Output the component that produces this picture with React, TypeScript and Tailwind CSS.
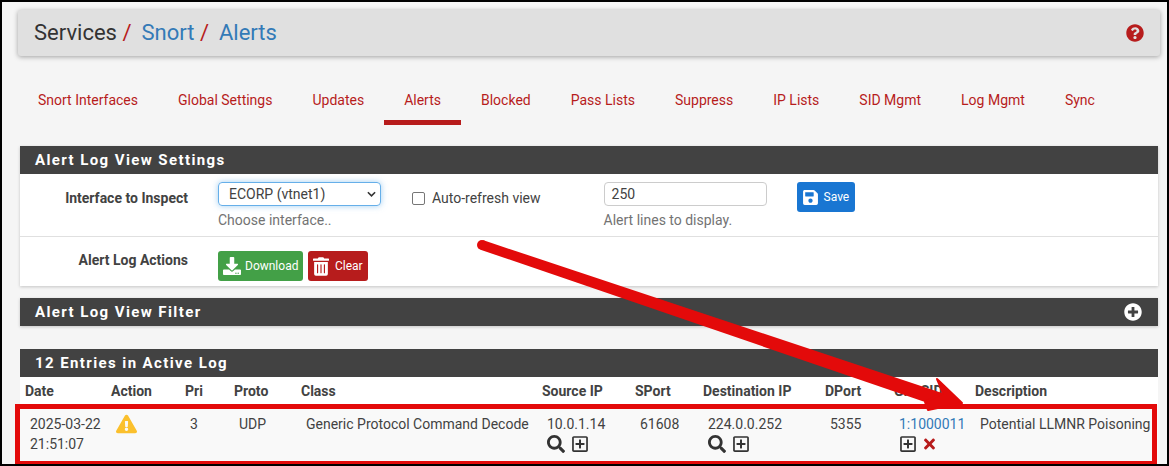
import { FaDownload, FaExclamationTriangle, FaPlusCircle, FaQuestionCircle, FaRegPlusSquare, FaSave, FaSearch, FaTimes, FaTrashAlt } from "react-icons/fa";

const tabs = ["Snort Interfaces", "Global Settings", "Updates", "Alerts", "Blocked", "Pass Lists", "Suppress", "IP Lists", "SID Mgmt", "Log Mgmt", "Sync"];
const columns = ["Date", "Action", "Pri", "Proto", "Class", "Source IP", "SPort", "Destination IP", "DPort", "GID:SID", "Description"];
const gridCols = "grid grid-cols-[86px_74px_49px_67px_241px_93px_68px_122px_69px_81px_1fr]";

const PanelHeading = ({ title, children }: { title: string; children?: React.ReactNode }) => (
  <div className="flex h-[28px] items-center justify-between bg-[#424242] pl-[15px] pr-[16px] text-[15px] font-bold tracking-[1.4px] text-white">
    <span>{title}</span>
    {children}
  </div>
);

const App = () => {
  return (
    <div className="relative h-[466px] w-[1169px] overflow-hidden border-2 border-black bg-[#f5f5f5] font-['Roboto',sans-serif] text-[14px] text-[#424242]">
      <div className="pl-[16px] pr-[7px] pt-[8px]">
        {/* Breadcrumb */}
        <div className="flex h-[46px] items-center justify-between rounded-[3px] bg-[#e0e0e0] pl-[16px] pr-[16px] shadow-[0_1px_5px_rgba(0,0,0,0.35)]">
          <h1 className="text-[22px] leading-none text-[#333]">
            Services <span className="text-[#b71c1c]">/</span>
            <span className="ml-[10px] text-[#337ab7]">Snort</span> <span className="text-[#b71c1c]">/</span>
            <span className="ml-[10px] text-[#337ab7]">Alerts</span>
          </h1>
          <FaQuestionCircle className="h-[18px] w-[18px] text-[#b71c1c]" />
        </div>

        {/* Tabs */}
        <nav className="mt-[16px] flex h-[54px]">
          {tabs.map((tab) => (
            <a key={tab} className={`flex h-[53px] items-center border-b-[5px] px-[20px] pt-[9px] text-[14px] text-[#b71c1c] ${tab === "Alerts" ? "border-[#b71c1c]" : "border-transparent"}`}>
              {tab}
            </a>
          ))}
        </nav>
      </div>

      <div className="pl-[18px] pr-[9px]">
        {/* Settings panel */}
        <section className="mt-[20px] bg-white shadow-[0_1px_3px_rgba(0,0,0,0.2)]">
          <PanelHeading title="Alert Log View Settings" />
          <div className="flex h-[63px] border-b border-[#e0e0e0] pt-[8px]">
            <div className="w-[168px] pt-[6px] text-right font-bold">Interface to Inspect</div>
            <div className="ml-[30px] w-[163px]">
              <div className="flex h-[24px] items-center justify-between rounded-[4px] border border-[#66afe9] pl-[10px] pr-[4px] shadow-[0_0_6px_rgba(102,175,233,0.6)]">
                <span>ECORP (vtnet1)</span>
                <svg viewBox="0 0 10 6" className="h-[6px] w-[9px] fill-none stroke-[#333] stroke-[1.8]">
                  <path d="M1 1l4 4 4-4" />
                </svg>
              </div>
              <p className="mt-[4px] text-[#737373]">Choose interface..</p>
            </div>
            <div className="ml-[31px] flex h-fit items-center pt-[6px]">
              <span className="h-[13px] w-[13px] rounded-[2px] border border-[#767676] bg-white" />
              <span className="ml-[7px]">Auto-refresh view</span>
            </div>
            <div className="ml-[63px] w-[163px]">
              <div className="flex h-[24px] items-center rounded-[4px] border border-[#ccc] pl-[7px]">250</div>
              <p className="mt-[4px] text-[#737373]">Alert lines to display.</p>
            </div>
            <a className="ml-[30px] flex h-[30px] w-[58px] items-center gap-[5px] rounded-[3px] bg-[#1976d2] pl-[5px] text-[12px] text-white">
              <FaSave className="h-[17px] w-[17px]" />
              Save
            </a>
          </div>
          <div className="flex h-[49px] pt-[14px]">
            <div className="-mt-[1px] w-[168px] text-right font-bold">Alert Log Actions</div>
            <div className="ml-[30px] flex gap-[5px]">
              <a className="flex h-[30px] w-[85px] items-center gap-[4px] rounded-[3px] bg-[#43a047] pl-[5px] text-[12px] text-white">
                <FaDownload className="h-[18px] w-[18px]" />
                Download
              </a>
              <a className="flex h-[30px] w-[60px] items-center gap-[6px] rounded-[3px] bg-[#b71c1c] pl-[5px] text-[12px] text-white">
                <FaTrashAlt className="h-[19px] w-[16px]" />
                Clear
              </a>
            </div>
          </div>
        </section>

        {/* Filter panel */}
        <section className="mt-[12px] shadow-[0_1px_3px_rgba(0,0,0,0.2)]">
          <PanelHeading title="Alert Log View Filter">
            <FaPlusCircle className="h-[18px] w-[18px]" />
          </PanelHeading>
        </section>

        {/* Log table */}
        <section className="mt-[23px] bg-white">
          <PanelHeading title="12 Entries in Active Log" />
          <div className={`${gridCols} h-[28px] items-center`}>
            {columns.map((col) => (
              <div key={col} className="pl-[5px] font-bold whitespace-nowrap">{col}</div>
            ))}
          </div>
          <div className={`${gridCols} h-[62px] bg-[#f9f9f9] pt-[9px] leading-[20px]`}>
            <div className="pl-[10px]">2025-03-22<br />21:51:07</div>
            <div className="pl-[10px]"><FaExclamationTriangle className="h-[20px] w-[21px] text-[#fbc02d]" /></div>
            <div className="pl-[10px]">3</div>
            <div className="pl-[10px]">UDP</div>
            <div className="pl-[10px] whitespace-nowrap">Generic Protocol Command Decode</div>
            <div className="pl-[10px]">
              10.0.1.14
              <div className="mt-[1px] flex items-center gap-[6px] text-[#333]"><FaSearch className="h-[18px] w-[18px]" /><FaRegPlusSquare className="h-[18px] w-[18px]" /></div>
            </div>
            <div className="pl-[10px]">61608</div>
            <div className="pl-[10px]">
              224.0.0.252
              <div className="mt-[1px] flex items-center gap-[6px] text-[#333]"><FaSearch className="h-[18px] w-[18px]" /><FaRegPlusSquare className="h-[18px] w-[18px]" /></div>
            </div>
            <div className="pl-[10px]">5355</div>
            <div className="pl-[10px]">
              <span className="text-[#337ab7]">1:1000011</span>
              <div className="mt-[1px] flex items-center gap-[5px] text-[#333]"><FaRegPlusSquare className="h-[18px] w-[18px]" /><FaTimes className="h-[16px] w-[15px] text-[#b71c1c]" /></div>
            </div>
            <div className="pl-[10px] whitespace-nowrap">Potential LLMNR Poisoning</div>
          </div>
        </section>
      </div>

      {/* Red annotation drawn on top of the screenshot */}
      <svg viewBox="0 0 1169 466" className="absolute -left-[2px] -top-[2px] h-[466px] w-[1169px]">
        <rect x="17.5" y="406.5" width="1137" height="57" fill="none" stroke="#e30a0a" strokeWidth="5" />
        <circle cx="482" cy="245" r="5" fill="#e30a0a" />
        <path d="M483.5 240.3L945 394L925 402L480.5 249.7Z" fill="#e30a0a" />
        <path d="M937 379L962 403L928 410L925 402L943 393Z" fill="#e30a0a" stroke="#e30a0a" strokeWidth="2" strokeLinejoin="round" />
      </svg>
    </div>
  );
};

export default App;
